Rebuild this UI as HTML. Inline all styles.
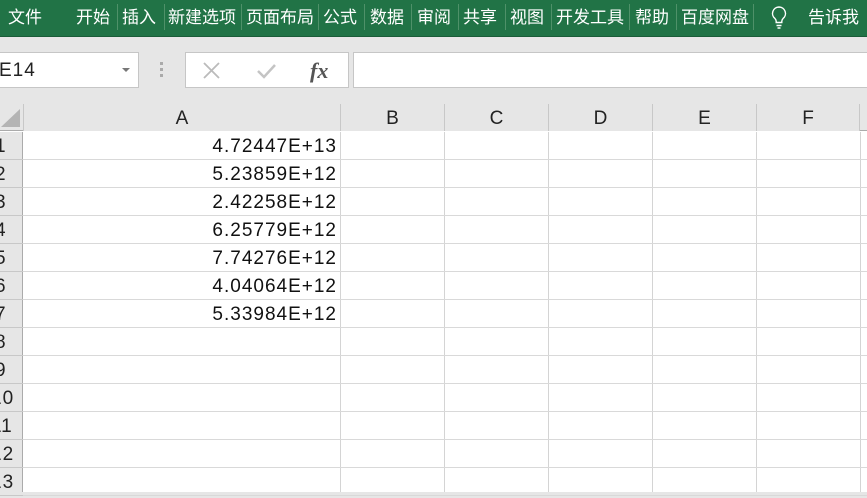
<!DOCTYPE html>
<html><head><meta charset="utf-8"><style>
*{margin:0;padding:0;box-sizing:border-box}
body{width:867px;height:492px;overflow:hidden;background:#e6e6e6;position:relative;font-family:"Liberation Sans","Noto Sans CJK SC",sans-serif}
.a{position:absolute}
.rib{left:0;top:0;width:867px;height:36px;background:#217346;color:#fff;font-size:17px}
.rib span{position:absolute;top:5px;white-space:nowrap;font-family:"Noto Sans CJK SC",sans-serif;line-height:22px;overflow:hidden}
.sep{position:absolute;top:4px;width:1px;height:26px;background:#4f9169}
.box{background:#fff;border:1px solid #c6c6c6}
.hd{background:#e6e6e6;color:#222;font-size:19px;text-align:center;line-height:30px}
.rn{font-size:19px;color:#222;line-height:30px;letter-spacing:1px}
.v{font-size:19px;color:#111;text-align:right;line-height:30px;letter-spacing:1px}
</style></head><body>
<div class="a rib">
<span style="left:8px">文件</span>
<span style="left:76px">开始</span>
<span style="left:122px">插入</span>
<span style="left:168px;width:70px">新建选项</span>
<span style="left:246px;width:70px">页面布局</span>
<span style="left:323px">公式</span>
<span style="left:370px">数据</span>
<span style="left:417px">审阅</span>
<span style="left:463px">共享</span>
<span style="left:510px">视图</span>
<span style="left:556px;width:70px">开发工具</span>
<span style="left:635px">帮助</span>
<span style="left:681px;width:70px">百度网盘</span>
<span style="left:808px">告诉我</span>
<div class="sep" style="left:117px"></div><div class="sep" style="left:164px"></div><div class="sep" style="left:241px"></div><div class="sep" style="left:318px"></div><div class="sep" style="left:364px"></div><div class="sep" style="left:411px"></div><div class="sep" style="left:458px"></div><div class="sep" style="left:505px"></div><div class="sep" style="left:551px"></div><div class="sep" style="left:629px"></div><div class="sep" style="left:676px"></div><div class="sep" style="left:753px"></div>
<svg class="a" style="left:770px;top:5px" width="18" height="26" viewBox="0 0 18 26"><path d="M9 2a6.5 6.5 0 0 0-4 11.6c.8.8 1.2 1.6 1.2 2.6v1.3h5.6v-1.3c0-1 .4-1.8 1.2-2.6A6.5 6.5 0 0 0 9 2z" fill="none" stroke="#fff" stroke-width="1.4"/><path d="M6.5 20.5h5M7.5 23h3" stroke="#fff" stroke-width="1.4"/></svg>
</div>
<div class="a" style="left:0;top:36px;width:867px;height:1px;background:#1a5c38"></div>
<div class="a box" style="left:-2px;top:52px;width:141px;height:36px;font-size:19px;line-height:36px;color:#222;letter-spacing:1px">E14</div>
<div class="a" style="left:122px;top:68px;border-left:4px solid transparent;border-right:4px solid transparent;border-top:4px solid #777"></div>
<div class="a" style="left:160px;top:62px;width:3px;height:3px;background:#aaa;box-shadow:0 6px #aaa,0 12px #aaa"></div>
<div class="a box" style="left:185px;top:52px;width:164px;height:36px"></div>
<svg class="a" style="left:200px;top:60px" width="140" height="24"><path d="M4 3l15 15M19 3L4 18" stroke="#bbb" stroke-width="1.8"/><path d="M58 11l6 6 11-12" stroke="#c4c4c4" stroke-width="2.5" fill="none"/><text x="110" y="18" font-family="Liberation Serif,serif" font-style="italic" font-weight="bold" font-size="22" fill="#555">fx</text></svg>
<div class="a box" style="left:353px;top:52px;width:520px;height:36px"></div>
<div class="a" style="left:0;top:104px;width:867px;height:388px;background:#fff"></div>
<div class="a hd" style="left:0;top:104px;width:867px;height:27px;border-bottom:1px solid #ababab"></div>
<svg class="a" style="left:0;top:106px" width="23" height="24"><path d="M1 21L20 3v18z" fill="#b4b4b4"/></svg>
<div class="a hd" style="left:23px;top:104px;width:317px;height:27px;border-left:1px solid #c8c8c8">A</div>
<div class="a hd" style="left:340px;top:104px;width:104px;height:27px;border-left:1px solid #c8c8c8">B</div>
<div class="a hd" style="left:444px;top:104px;width:104px;height:27px;border-left:1px solid #c8c8c8">C</div>
<div class="a hd" style="left:548px;top:104px;width:104px;height:27px;border-left:1px solid #c8c8c8">D</div>
<div class="a hd" style="left:652px;top:104px;width:104px;height:27px;border-left:1px solid #c8c8c8">E</div>
<div class="a hd" style="left:756px;top:104px;width:104px;height:27px;border-left:1px solid #c8c8c8;border-right:1px solid #c8c8c8">F</div>
<div class="a" style="left:0;top:132px;width:23px;height:360px;background:#e6e6e6;border-right:1px solid #ababab"></div>
<div id="g"></div>
<script>
var g=document.getElementById('g'),h='';
var vals=['4.72447E+13','5.23859E+12','2.42258E+12','6.25779E+12','7.74276E+12','4.04064E+12','5.33984E+12'];
[340,444,548,652,756,860].forEach(function(x){h+='<div class="a" style="left:'+x+'px;top:132px;width:1px;height:360px;background:#d4d4d4"></div>'});
for(var i=0;i<13;i++){var y=131+i*28;
h+='<div class="a" style="left:0;top:'+(y+28)+'px;width:23px;height:1px;background:#c8c8c8"></div>';
h+='<div class="a" style="left:23px;top:'+(y+28)+'px;width:844px;height:1px;background:#d9d9d9"></div>';
var n=String(i+1);h+='<div class="a rn" style="left:'+(n.length>1?-9:-5)+'px;top:'+(y+1)+'px">'+n+'</div>';
if(i<7)h+='<div class="a v" style="left:23px;top:'+(y+1)+'px;width:314px">'+vals[i]+'</div>';}
g.innerHTML=h;
</script>
</body></html>
